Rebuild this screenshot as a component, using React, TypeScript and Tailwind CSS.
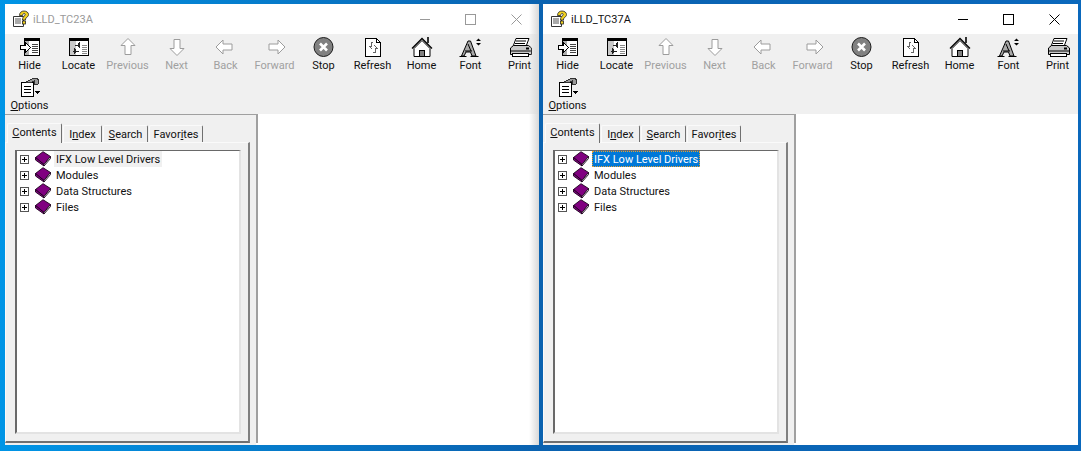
import type { ReactNode } from 'react';

const font = "font-['Roboto',Arial,sans-serif]";

function Svg({ children }: { children: ReactNode }) {
  return (
    <svg width="30" height="22" viewBox="0 0 30 22" shapeRendering="crispEdges">
      {children}
    </svg>
  );
}

function HideIcon() {
  return (
    <Svg>
      <rect x="9.500" y="1.500" width="15" height="17" fill="#fff" stroke="#000" />
      <rect x="10" y="2" width="14" height="2" fill="#000" />
      <rect x="10" y="4" width="4" height="14" fill="#b0b0b0" />
      <path d="M17 7h6M17 9h6M17 11h6M17 13h6M17 15h6" stroke="#444" />
      <path d="M5.500 8.500h5v-3l5 5-5 5v-3h-5z" fill="#fff" stroke="#000" />
    </Svg>
  );
}

function LocateIcon() {
  return (
    <Svg>
      <rect x="5.500" y="1.500" width="19" height="17" fill="#fff" stroke="#000" />
      <rect x="6" y="2" width="18" height="2" fill="#000" />
      <rect x="6" y="4" width="6" height="14" fill="#c8c8c8" />
      <path d="M18 8h5M18 10h5M18 12h5M18 14h5M18 16h5" stroke="#888" />
      <path d="M11 8h5M14 6v4M15 5v6M9 14h6M11 12v4M10 11v6" stroke="#222" fill="none" />
    </Svg>
  );
}

function ArrowIcon({ dir }: { dir: 'up' | 'down' | 'left' | 'right' }) {
  const d = {
    up: 'M15 1.500l7 7h-4v9h-6v-9h-4z',
    down: 'M15 18.500l-7-7h4v-9h6v9h4z',
    left: 'M5 10l7-7v4h9v6h-9v4z',
    right: 'M25 10l-7-7v4h-9v6h9v4z',
  }[dir];
  return (
    <svg width="30" height="22" viewBox="0 0 30 22">
      <path d={d} fill="#fff" stroke="#9c9c9c" />
    </svg>
  );
}

function StopIcon() {
  return (
    <svg width="30" height="22" viewBox="0 0 30 22">
      <circle cx="14.500" cy="10" r="9.500" fill="#808080" stroke="#1c1c1c" />
      <path d="M11 6.500l7 7M18 6.500l-7 7" stroke="#fff" strokeWidth="2.600" />
    </svg>
  );
}

function RefreshIcon() {
  return (
    <Svg>
      <path d="M7.500 1.500h11l4 4v14h-15z" fill="#fff" stroke="#000" />
      <path d="M18.500 1.500v4h4" fill="none" stroke="#000" />
      <path d="M15 5h-2v4h-2l3 3M15 15h2v-4h2l-3-3" fill="none" stroke="#666" />
    </Svg>
  );
}

function HomeIcon() {
  return (
    <svg width="30" height="22" viewBox="0 0 30 22">
      <path d="M7 19.500v-8l8-8 8 8v8z" fill="#fff" stroke="#000" />
      <path d="M5 11.500L15 1.500 25 11.500" fill="none" stroke="#000" strokeWidth="1.300" />
      <rect x="20" y="0" width="2" height="6" fill="#333" />
      <rect x="12.500" y="13.500" width="5" height="6" fill="#808080" stroke="#000" />
    </svg>
  );
}

function FontIcon() {
  return (
    <svg width="30" height="22" viewBox="0 0 30 22">
      <path d="M12 4h2.500l5.500 15h-4l-1.500-4h-4.500L8 19H5.500z" fill="#a8a8a8" stroke="#000" />
      <path d="M9 14h7M12 7l3 7" stroke="#000" />
      <path d="M3.500 19.500h7M14.500 19.500h8" stroke="#000" />
      <path d="M20 4l2.500-2.500L25 4zM20 6l2.500 2.500L25 6z" fill="#000" />
    </svg>
  );
}

function PrintIcon() {
  return (
    <svg width="30" height="22" viewBox="0 0 30 22">
      <path d="M11 1.500h13l-3 8H8z" fill="#fff" stroke="#000" />
      <path d="M11 4h10M10 6.500h10" stroke="#000" />
      <path d="M5.500 11l3-2.500h15l3 2.500v6.500h-21z" fill="#c8c8c8" stroke="#000" />
      <path d="M5.500 14h21" stroke="#000" />
      <rect x="7.500" y="16.500" width="16" height="3" fill="#fff" stroke="#000" />
      <rect x="21" y="10.500" width="3" height="2" fill="#000" />
    </svg>
  );
}

function OptionsIcon() {
  return (
    <Svg>
      <rect x="6.500" y="5.500" width="12" height="14" fill="#fff" stroke="#000" strokeWidth="1.500" />
      <path d="M9 9h7M9 12h7M9 15h7" stroke="#000" />
      <path d="M11 5l6-3 4-1 3 2-1 4h-4v-3l-4 2z" fill="#9a9a9a" stroke="#333" />
      <path d="M20 14h5l-2.500 3z" fill="#000" />
    </Svg>
  );
}

function HelpIcon() {
  return (
    <svg width="18" height="18" viewBox="0 0 18 18">
      <path d="M1.500 6.500h10v10h-10z" fill="#fff" stroke="#333" />
      <path d="M3 9h6M3 11h6M3 13h6" stroke="#555" />
      <path
        d="M7.500 5.500C7.500 2.500 9.500 1 12 1s4.500 1.500 4.500 3.500c0 2-1.500 2.500-2.500 3.500-.5.5-.5 1-.5 2h-3c0-2 .5-3 1.500-3.800.8-.7 1.200-1 1.200-1.700s-.5-1-1.200-1-1.200.5-1.300 2z"
        fill="#f2d21f"
        stroke="#222"
        strokeWidth="0.800"
      />
      <rect x="10.500" y="11" width="3" height="3" fill="#f2d21f" stroke="#222" strokeWidth="0.800" />
    </svg>
  );
}

function BookIcon() {
  return (
    <svg width="18" height="16" viewBox="0 0 18 16" className="shrink-0">
      <path d="M1.500 6.500L9 0.700l7.500 4.800-6.500 8z" fill="#800080" stroke="#1a001a" strokeWidth="0.900" />
      <path d="M1.500 6.500v2.500l8.500 6v-1.500z" fill="#800080" stroke="#1a001a" strokeWidth="0.900" />
      <path d="M10 13.500V15l6.500-7.500V5.500z" fill="#fff" stroke="#1a001a" strokeWidth="0.900" />
    </svg>
  );
}

const buttons: { label: ReactNode; icon: ReactNode; off?: boolean }[] = [
  { label: 'Hide', icon: <HideIcon /> },
  { label: 'Locate', icon: <LocateIcon /> },
  { label: 'Previous', icon: <ArrowIcon dir="up" />, off: true },
  { label: 'Next', icon: <ArrowIcon dir="down" />, off: true },
  { label: 'Back', icon: <ArrowIcon dir="left" />, off: true },
  { label: 'Forward', icon: <ArrowIcon dir="right" />, off: true },
  { label: 'Stop', icon: <StopIcon /> },
  { label: 'Refresh', icon: <RefreshIcon /> },
  { label: 'Home', icon: <HomeIcon /> },
  { label: 'Font', icon: <FontIcon /> },
  { label: 'Print', icon: <PrintIcon /> },
  { label: <><u>O</u>ptions</>, icon: <OptionsIcon /> },
];

const treeItems = ['IFX Low Level Drivers', 'Modules', 'Data Structures', 'Files'];

function Tab({ children, active, width }: { children: ReactNode; active?: boolean; width: string }) {
  return (
    <div
      className={`${width} flex items-center justify-center rounded-t-[2px] border-t border-l border-r border-t-[#fafafa] border-l-[#fafafa] border-r-[#707070] bg-[#f0f0f0] pt-px ${
        active ? 'relative z-10 -mb-px h-[20px] pb-[3px]' : 'h-[17px]'
      }`}
    >
      {children}
    </div>
  );
}

function HelpWindow({ title, active }: { title: string; active?: boolean }) {
  return (
    <div className={`relative flex h-[441px] flex-col ${active ? 'w-[535px]' : 'w-[534px]'} bg-white text-[11px] leading-[14px] text-[#111] ${font}`}>
      <div className="flex h-[30px] shrink-0 items-center pl-[7px]">
        <HelpIcon />
        <span className={`ml-[3px] pt-px ${active ? 'text-[#111]' : 'text-[#9a9a9a]'}`}>{title}</span>
        <div className="ml-auto flex items-center">
          <div className={`h-px w-[10px] ${active ? 'bg-black' : 'bg-[#999]'}`} />
          <div className={`ml-[35px] h-[11px] w-[11px] border ${active ? 'border-black' : 'border-[#999]'}`} />
          <svg width="11" height="11" viewBox="0 0 11 11" className={`ml-[35px] ${active ? 'mr-[18px]' : 'mr-[17px]'}`}>
            <path d="M0.500 0.500l10 10M10.500 0.500l-10 10" stroke={active ? '#000' : '#999'} />
          </svg>
        </div>
      </div>

      <div className="grid h-[80px] shrink-0 grid-cols-[repeat(11,49px)] grid-rows-[40px_40px] bg-[#f0f0f0]">
        {buttons.map((b, i) => (
          <div key={i} className="flex flex-col items-center pt-[3px]">
            <div className="h-[22px]">{b.icon}</div>
            <span className={`whitespace-nowrap ${b.off ? 'text-[#a0a0a0]' : ''}`}>{b.label}</span>
          </div>
        ))}
      </div>

      <div className="flex min-h-0 flex-1">
        <div className="flex w-[251px] shrink-0 flex-col border-t border-t-[#a0a0a0] bg-[#f0f0f0] pt-[8px] pb-[2px]">
          <div className="flex h-[19px] items-end gap-px pl-[2px]">
            <Tab active width="w-[55px]"><span><u>C</u>ontents</span></Tab>
            <Tab width="w-[39px]"><span>I<u>n</u>dex</span></Tab>
            <Tab width="w-[45px]"><span><u>S</u>earch</span></Tab>
            <Tab width="w-[54px]"><span>Favor<u>i</u>tes</span></Tab>
          </div>
          <div className="min-h-0 w-[245px] flex-1 border-t border-l border-r-2 border-b-2 border-t-[#fafafa] border-l-[#fafafa] border-r-[#808080] border-b-[#707070] p-[7px_7px_7px_9px]">
            <div className="h-full border-t border-l-2 border-r-2 border-b-2 border-t-[#696969] border-l-[#696969] border-r-[#e3e3e3] border-b-[#e3e3e3] bg-white pl-[3px]">
              {treeItems.map((name, i) => (
                <div key={name} className="flex h-[16px] items-center">
                  <svg width="9" height="9" viewBox="0 0 9 9" shapeRendering="crispEdges" className="shrink-0">
                    <rect x="0.500" y="0.500" width="8" height="8" fill="#fff" stroke="#555" />
                    <path d="M2 4.500h5M4.500 2v5" stroke="#000" />
                  </svg>
                  <div className="ml-[5px]"><BookIcon /></div>
                  <span
                    className={`ml-[2px] flex h-[16px] items-center whitespace-nowrap px-[2px] pt-px ${
                      i === 0
                        ? active
                          ? 'bg-[#0078d7] text-white outline-1 -outline-offset-1 outline-dotted outline-[#e8a030]'
                          : 'bg-[#f0f0f0]'
                        : ''
                    }`}
                  >
                    {name}
                  </span>
                </div>
              ))}
            </div>
          </div>
        </div>
        <div className="min-w-0 flex-1 bg-white">
          <div className="mb-[2px] h-[329px] w-[2px] bg-[#a0a0a0]" />
        </div>
      </div>
      {!active && <div className="absolute top-0 right-0 bottom-0 w-[10px] bg-gradient-to-r from-transparent to-[#d8d8d8]" />}
    </div>
  );
}

export default function App() {
  return (
    <div className="flex h-[451px] w-[1081px] items-start gap-[4px] overflow-hidden bg-gradient-to-r from-[#0095e6] via-[#0a62b0] to-[#0a68bc] pt-[4px] pl-[5px]">
      <HelpWindow title="iLLD_TC23A" />
      <HelpWindow title="iLLD_TC37A" active />
    </div>
  );
}
